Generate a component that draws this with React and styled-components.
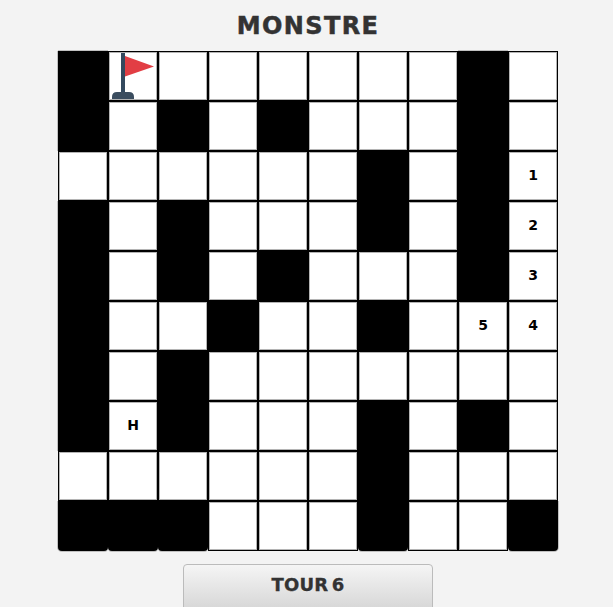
import React from "react";
import styled, { createGlobalStyle } from "styled-components";

const GlobalStyle = createGlobalStyle`
  html, body {
    margin: 0;
    height: 100%;
    overflow: hidden;
    background: #f3f3f3;
  }
`;

const Page = styled.div`
  width: 500px;
  margin-left: 58px;
  display: flex;
  flex-direction: column;
  align-items: center;
  font-family: "DejaVu Sans", "Liberation Sans", sans-serif;
  font-weight: 700;
`;

const Title = styled.h1`
  margin: 0;
  height: 51px;
  line-height: 53px;
  font-size: 24px;
  font-weight: 700;
  letter-spacing: 1.4px;
  color: #333;
  -webkit-text-stroke: 0.5px #333;
`;

const Board = styled.div`
  display: grid;
  grid-template-columns: repeat(10, 50px);
  grid-auto-rows: 50px;
`;

const Cell = styled.div`
  box-sizing: border-box;
  display: flex;
  align-items: center;
  justify-content: center;
  padding-bottom: 2px;
  font-size: 14px;
  color: #000;
  background: #fff;
  border: 1px solid #000;
  box-shadow: inset 0 0 0 1px #b4b4b4;
`;

const Wall = styled.div`
  background: #000;
  border-radius: ${(p) => (p.$bottom ? "0 0 4px 4px" : "0")};
  box-shadow: ${(p) => p.$edge};
`;

const TurnButton = styled.button`
  box-sizing: border-box;
  flex: none;
  width: 250px;
  height: 50px;
  margin-top: 13px;
  padding: 0 0 9px;
  font-family: inherit;
  font-weight: 700;
  font-size: 18px;
  letter-spacing: 0.2px;
  word-spacing: -3px;
  color: #333;
  -webkit-text-stroke: 0.3px #333;
  border: 1px solid #bbb;
  border-radius: 4px;
  background: linear-gradient(#f5f5f5, #d4d4d4);
`;

const FlagIcon = () => (
  <svg width="48" height="48" viewBox="0 0 48 48">
    <path d="M16 5 L45 15.5 L16 25.5 Z" fill="#e23e44" />
    <rect x="12" y="2" width="4" height="40" fill="#34495e" />
    <path d="M3 48 V46 Q3 41 8 41 H20 Q25 41 25 46 V48 Z" fill="#3b4d5f" />
  </svg>
);

// # mur, F drapeau, . vide, le reste est affiché tel quel
const map = [
  "#F......#.",
  "#.#.#...#.",
  "......#.#1",
  "#.#...#.#2",
  "#.#.#...#3",
  "#..#..#.54",
  "#.#.......",
  "#H#...#.#.",
  "......#...",
  "###...#..#",
];

// liseré gris seulement sur le bord extérieur du plateau
const edgeShadow = (x, y) => {
  const grey = "rgba(170, 170, 170, 0.7)";
  const parts = [];
  if (y === 0) parts.push(`0 -1px 0 ${grey}`);
  if (y === 9) parts.push(`0 1px 0 ${grey}`);
  if (x === 0) parts.push(`-1px 0 0 ${grey}`);
  if (x === 9) parts.push(`1px 0 0 ${grey}`);
  return parts.join(", ") || "none";
};

export default function App() {
  return (
    <Page>
      <GlobalStyle />
      <Title>MONSTRE</Title>
      <Board>
        {map.flatMap((row, y) =>
          row.split("").map((c, x) =>
            c === "#" ? (
              <Wall key={`${x}-${y}`} $bottom={y === 9} $edge={edgeShadow(x, y)} />
            ) : (
              <Cell key={`${x}-${y}`}>
                {c === "F" ? <FlagIcon /> : c === "." ? null : c}
              </Cell>
            )
          )
        )}
      </Board>
      <TurnButton>TOUR 6</TurnButton>
    </Page>
  );
}
